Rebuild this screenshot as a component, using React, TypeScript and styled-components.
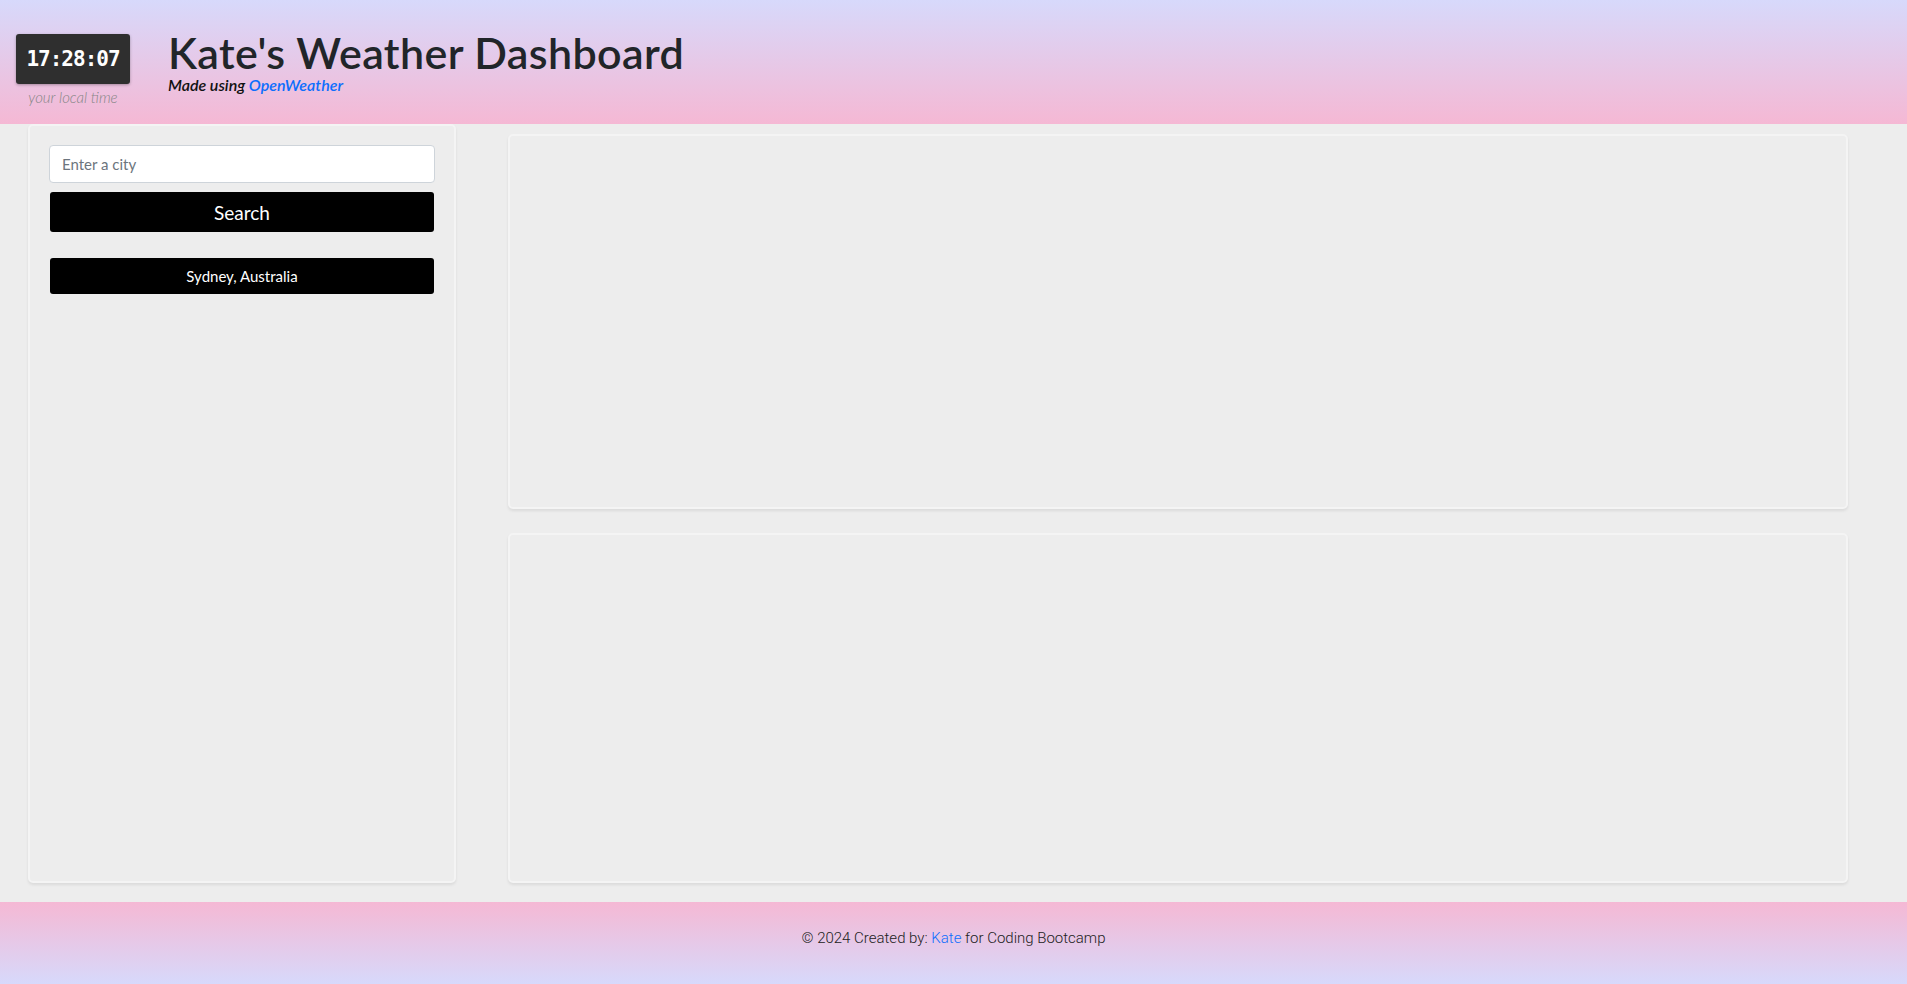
import React from "react";
import styled, { createGlobalStyle } from "styled-components";

const Global = createGlobalStyle`
  * { box-sizing: border-box; }
  html, body { margin: 0; padding: 0; }
  body {
    background: #ededed;
    font-family: "Lato", "Liberation Sans", sans-serif;
    color: #212529;
  }
`;

const Page = styled.div`
  display: flex;
  flex-direction: column;
  min-height: 984px;
`;

const Header = styled.header`
  height: 124px;
  display: flex;
  align-items: flex-start;
  gap: 38px;
  padding: 34px 0 0 16px;
  background: linear-gradient(to bottom, #d7d9fb 0%, #f5b8d4 100%);
`;

const ClockColumn = styled.div`
  display: flex;
  flex-direction: column;
  align-items: center;
  width: 114px;
`;

const ClockFace = styled.div`
  width: 114px;
  height: 50px;
  background: #2f2f2f;
  border-radius: 3px;
  box-shadow: 0 1px 3px rgba(0, 0, 0, 0.3);
  display: flex;
  align-items: center;
  justify-content: center;
  color: #fff;
  font-family: "DejaVu Sans Mono", monospace;
  font-weight: bold;
  font-size: 21px;
  letter-spacing: -1px;
`;

const ClockCaption = styled.div`
  margin-top: 4px;
  font-style: italic;
  font-weight: 300;
  font-size: 15px;
  color: #868686;
  font-family: "Lato", sans-serif;
`;

const TitleBlock = styled.div`
  display: flex;
  flex-direction: column;
  margin-top: -4px;
`;

const Title = styled.h1`
  margin: 0;
  font-family: "Lato", sans-serif;
  font-weight: 600;
  font-size: 43px;
  line-height: 46px;
  color: #212529;
  letter-spacing: 0.4px;
`;

const Subtitle = styled.div`
  font-style: italic;
  font-weight: 600;
  font-size: 16px;
  color: #111;
  margin-top: -1px;
`;

const Link = styled.a`
  color: #0d6efd;
  text-decoration: none;
`;

const Body = styled.main`
  display: grid;
  grid-template-columns: 428px 1fr;
  column-gap: 52px;
  padding: 0 59px 0 28px;
  height: 759px;
`;

const Panel = styled.section`
  background: #ededed;
  border: 2px solid #f4f4f4;
  border-radius: 5px;
  box-shadow: 0 2px 3px rgba(0, 0, 0, 0.08);
`;

const Sidebar = styled(Panel)`
  display: flex;
  flex-direction: column;
  padding: 19px 19px 0 19px;
`;

const CityInput = styled.input`
  width: 100%;
  height: 38px;
  border: 1px solid #ced4da;
  border-radius: 4px;
  background: #fff;
  padding: 0 12px;
  font-family: "Lato", sans-serif;
  font-size: 15px;
  color: #212529;
  &::placeholder { color: #6c757d; }
`;

const DarkButton = styled.button<{ $big?: boolean }>`
  width: calc(100% - 2px);
  margin-left: 1px;
  height: ${(p) => (p.$big ? "40px" : "36px")};
  background: #000;
  color: #fff;
  border: none;
  border-radius: 3px;
  font-family: "Lato", sans-serif;
  font-size: ${(p) => (p.$big ? "19px" : "15px")};
  cursor: pointer;
`;

const SearchButton = styled(DarkButton)`
  margin-top: 9px;
`;

const HistoryList = styled.div`
  margin-top: 26px;
  display: flex;
  flex-direction: column;
  gap: 8px;
`;

const MainColumn = styled.div`
  display: flex;
  flex-direction: column;
  gap: 24px;
  padding-top: 10px;
`;

const TodayCard = styled(Panel)`
  height: 375px;
`;

const ForecastCard = styled(Panel)`
  flex: 1;
`;

const Footer = styled.footer`
  margin-top: 19px;
  height: 82px;
  display: flex;
  align-items: center;
  justify-content: center;
  padding-bottom: 10px;
  background: linear-gradient(to bottom, #f5b8d4 0%, #d7d9fb 100%);
  font-family: "Roboto", sans-serif;
  font-weight: 300;
  font-size: 15px;
  color: #222;
`;

export default function App() {
  return (
    <Page>
      <Global />
      <Header>
        <ClockColumn>
          <ClockFace>17:28:07</ClockFace>
          <ClockCaption>your local time</ClockCaption>
        </ClockColumn>
        <TitleBlock>
          <Title>Kate's Weather Dashboard</Title>
          <Subtitle>
            Made using <Link href="#">OpenWeather</Link>
          </Subtitle>
        </TitleBlock>
      </Header>
      <Body>
        <Sidebar>
          <CityInput placeholder="Enter a city" />
          <SearchButton $big>Search</SearchButton>
          <HistoryList>
            <DarkButton>Sydney, Australia</DarkButton>
          </HistoryList>
        </Sidebar>
        <MainColumn>
          <TodayCard />
          <ForecastCard />
        </MainColumn>
      </Body>
      <Footer>
        <span>
          © 2024 Created by: <Link href="#">Kate</Link> for Coding Bootcamp
        </span>
      </Footer>
    </Page>
  );
}
